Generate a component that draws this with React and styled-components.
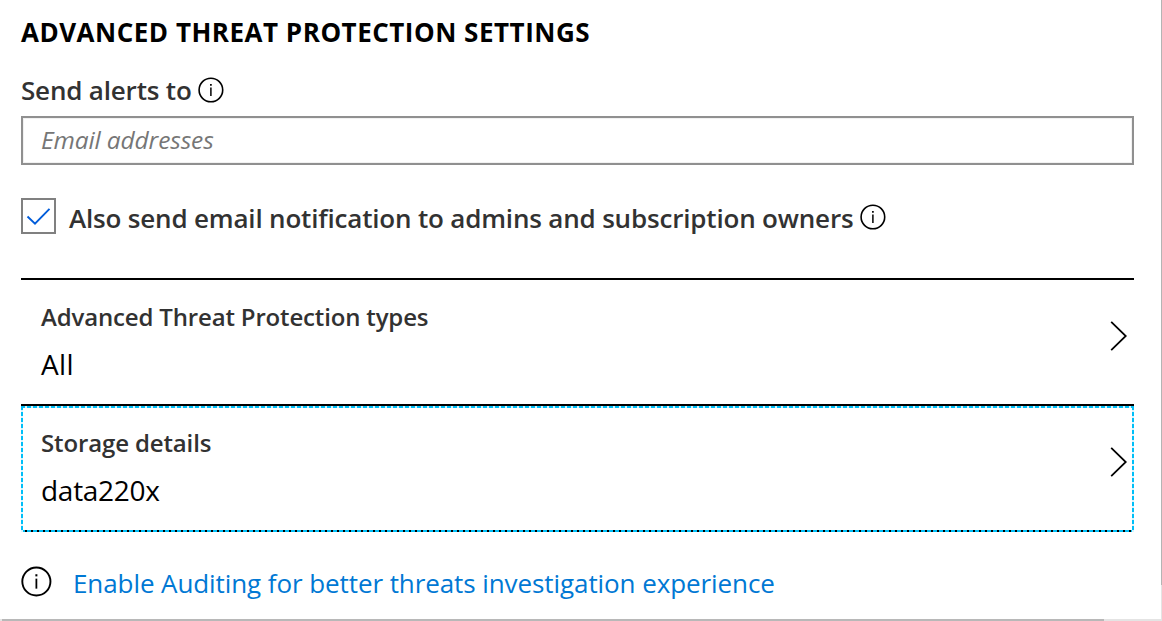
import React from "react";
import styled, { createGlobalStyle } from "styled-components";

const Global = createGlobalStyle`
  * { box-sizing: border-box; }
  html, body { margin: 0; overflow: hidden; background: #fff; }
  body { font-family: "Open Sans", "Noto Sans", sans-serif; color: #323232; }
`;

const Frame = styled.div`
  display: grid;
  grid-template-columns: 1161px 1px;
  grid-template-rows: 619px 2px;
  width: 1162px;
  height: 621px;
`;

const VerticalTrack = styled.div`
  background: linear-gradient(#b4b4b4 0 585px, #e4e4e4 585px);
`;

const HorizontalTrack = styled.div`
  grid-column: 1 / -1;
  background: linear-gradient(90deg, #e4e4e4 0 2px, #b8b8b8 2px 1104px, #e4e4e4 1104px);
`;

const Panel = styled.main`
  display: flex;
  flex-direction: column;
  width: 1134px;
  padding-left: 21px;
`;

const Heading = styled.h1`
  margin: 12px 0 0;
  height: 40px;
  line-height: 40px;
  font-size: 26px;
  font-weight: 700;
  color: #000;
  white-space: nowrap;
`;

const FieldLabel = styled.label`
  display: flex;
  align-items: center;
  gap: 6px;
  height: 36px;
  margin-top: 20px;
  font-size: 26px;
  font-weight: 600;
  white-space: nowrap;
`;

const EmailInput = styled.input`
  display: block;
  margin-top: 8px;
  width: 1113px;
  height: 49px;
  padding: 0 18px 2px;
  border: 2px solid #909090;
  border-radius: 0;
  outline: none;
  box-shadow: inset 0 0 0 1px #f1f1f1;
  background: #fff;
  font: italic 400 24.5px "Open Sans", "Noto Sans", sans-serif;
  letter-spacing: -0.13px;
  &::placeholder { color: #767676; opacity: 1; }
`;

const CheckRow = styled.div`
  display: flex;
  align-items: center;
  height: 39px;
  margin-top: 33px;
`;

const CheckBox = styled.span`
  flex: none;
  align-self: flex-start;
  width: 35px;
  height: 36px;
  border: 2px solid #808080;
  svg { display: block; }
`;

const CheckLabel = styled.span`
  margin: 0 7px 0 13px;
  font-size: 26px;
  font-weight: 600;
  white-space: nowrap;
`;

const Selector = styled.section`
  display: flex;
  justify-content: space-between;
  height: ${(p) => (p.$focused ? 128 : 126)}px;
  margin-top: ${(p) => p.$gap || 0}px;
  border-top: 2px solid #000;
  padding: 17px 7px 0 20px;
  ${(p) =>
    p.$focused &&
    `background:
      repeating-linear-gradient(90deg, #00bff8 0 4px, #d5f4fd 4px 6px) 0 0 / 100% 2px no-repeat,
      repeating-linear-gradient(#00bff8 0 4px, #d5f4fd 4px 6px) 0 0 / 2px 100% no-repeat,
      repeating-linear-gradient(#00bff8 0 4px, #d5f4fd 4px 6px) 100% 0 / 2px 100% no-repeat,
      repeating-linear-gradient(90deg, #00bff8 0 4px, #000 4px 6px) 0 100% / 100% 2px no-repeat;`}
`;

const SelectorLabel = styled.div`
  height: 40px;
  line-height: 40px;
  font-size: 24px;
  font-weight: 600;
  white-space: nowrap;
`;

const SelectorValue = styled.div`
  margin-top: 5px;
  height: 44px;
  line-height: 44px;
  font-size: 28px;
  color: #000;
`;

const Chevron = styled.svg`
  display: block;
  margin-top: 24px;
`;

const Notice = styled.div`
  display: flex;
  align-items: center;
  height: 40px;
  margin-top: 30px;
`;

const NoticeLink = styled.a`
  margin-left: 21px;
  padding-top: 1px;
  color: #0078d4;
  font-size: 26px;
  white-space: nowrap;
`;

const InfoSvg = styled.svg`
  flex: none;
  display: block;
  margin-bottom: 1px;
`;

const Fit = styled.span`
  letter-spacing: ${(p) => p.$track || 0}px;
`;

function Info({ size = 26 }) {
  return (
    <InfoSvg width={size} height={size} viewBox="0 0 26 26" fill="none" stroke="#000">
      <circle cx="12.9" cy="13" r="11.8" strokeWidth="1.6" />
      <path d="M12.9 10.6V19" strokeWidth="1.5" />
      <path d="M12.9 6.9v1.8" strokeWidth="1.7" />
    </InfoSvg>
  );
}

function Row({ label, value, labelTrack, valueTrack, ...rest }) {
  return (
    <Selector {...rest}>
      <div>
        <SelectorLabel><Fit $track={labelTrack}>{label}</Fit></SelectorLabel>
        <SelectorValue><Fit $track={valueTrack}>{value}</Fit></SelectorValue>
      </div>
      <Chevron width="17" height="30" viewBox="0 0 17 30" fill="none" stroke="#000" strokeWidth="1.8">
        <path d="M1.2 0.8L15.8 15L1.2 29.2" />
      </Chevron>
    </Selector>
  );
}

export default function App() {
  return (
    <>
      <Global />
      <Frame>
        <Panel>
          <Heading><Fit $track={0.51}>ADVANCED THREAT PROTECTION SETTINGS</Fit></Heading>
          <FieldLabel><Fit $track={-0.18}>Send alerts to</Fit><Info /></FieldLabel>
          <EmailInput placeholder="Email addresses" />
          <CheckRow>
            <CheckBox>
              <svg width="31" height="32" viewBox="0 0 31 32" fill="none" stroke="#015cda" strokeWidth="1.9">
                <path d="M4.5 16.5L12 23.7L26.5 8.8" />
              </svg>
            </CheckBox>
            <CheckLabel><Fit $track={-0.18}>Also send email notification to admins and subscription owners</Fit></CheckLabel>
            <Info />
          </CheckRow>
          <Row $gap={41} label="Advanced Threat Protection types" labelTrack={-0.16} value="All" valueTrack={0.4} />
          <Row $focused label="Storage details" labelTrack={-0.13} value="data220x" valueTrack={-0.28} />
          <Notice>
            <Info size={31} />
            <NoticeLink><Fit $track={-0.085}>Enable Auditing for better threats investigation experience</Fit></NoticeLink>
          </Notice>
        </Panel>
        <VerticalTrack />
        <HorizontalTrack />
      </Frame>
    </>
  );
}
